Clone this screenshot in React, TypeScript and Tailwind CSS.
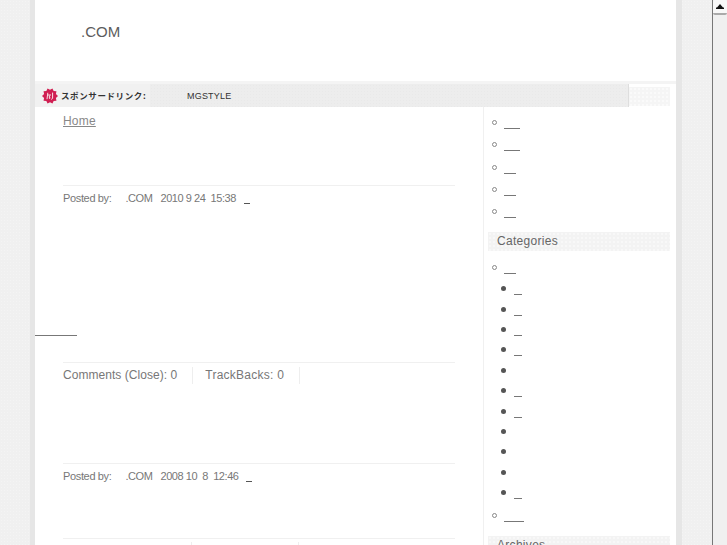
const font = { fontFamily: '"Liberation Sans", Arial, sans-serif' };

const weave =
  "bg-[#ededed] bg-[radial-gradient(#e9e9e9_1px,transparent_1px)] bg-[length:3px_3px]";

function Gap({ w }: { w: number }) {
  return <span className="inline-block border-b border-[#777] h-[12px] align-baseline" style={{ width: w }} />;
}

function Outer({ w, h = 22.3 }: { w: number; h?: number }) {
  return (
    <div className="flex items-center pl-[8px]" style={{ height: h }}>
      <span className="w-[5px] h-[5px] rounded-full border border-[#888] mr-[7px] -mt-[1px]" />
      <Gap w={w} />
    </div>
  );
}

function Inner({ w }: { w?: number }) {
  return (
    <div className="flex items-center pl-[17px] h-[20.4px]">
      <span className="w-[5px] h-[5px] rounded-full bg-[#555] mr-[8px] -mt-[1px]" />
      {w ? <Gap w={w} /> : null}
    </div>
  );
}

function SideHead({ children }: { children: string }) {
  return (
    <div className="ml-[4px] w-[182px] h-[19px] bg-[#f3f3f3] bg-[radial-gradient(#f8f8f8_1px,transparent_1px)] bg-[length:4px_4px] pl-[9px] text-[12px] leading-[18px] tracking-[0.3px] text-[#666]">
      {children}
    </div>
  );
}

function Logo() {
  const pts = Array.from({ length: 20 }, (_, i) => {
    const r = i % 2 ? 6.2 : 8;
    const a = (i * Math.PI) / 10;
    return `${8 + r * Math.cos(a)},${8 + r * Math.sin(a)}`;
  }).join(" ");
  return (
    <svg width="16" height="16" viewBox="0 0 16 16" className="shrink-0">
      <polygon points={pts} fill="#d01f52" />
      <path d="M5.8 4.8l-.8 6.4M6 7h3M10.6 4.6v5.8l-1.4 1M7.4 7.5v3l1-.6" stroke="#f8dfe6" strokeWidth="1" fill="none" />
    </svg>
  );
}

function PostedBy({ date, gap = 8 }: { date: string; gap?: number }) {
  return (
    <div className="h-[24px] flex items-center text-[11px] tracking-[-0.45px] text-[#777] whitespace-pre">
      <span className="w-[62.5px] tracking-[-0.35px]">Posted by:</span>
      <span className="w-[35px]">.COM</span>
      <span>{date}</span>
      <span className="inline-block w-[6px] border-b border-[#555] h-[11px]" style={{ marginLeft: gap }} />
    </div>
  );
}

export default function App() {
  return (
    <div
      className="w-[727px] h-[545px] overflow-hidden flex bg-[#f0f0f0] bg-[radial-gradient(#f4f4f4_1px,transparent_1px)] bg-[length:3px_3px]"
      style={font}
    >
      <div className="w-[30px] shrink-0" />
      <div className="w-[5px] shrink-0 bg-[#e6e6e6]" />
      <main className="w-[641px] shrink-0 bg-white flex flex-col">
        <header className="h-[81px] shrink-0 pl-[46px] pt-[22px] text-[15px] leading-[19px] tracking-[0.05px] text-[#5c5c5c]">.COM</header>
        <div className="h-[3px] shrink-0 bg-[#f4f4f4]" />
        <div className="h-[23px] shrink-0 flex">
          <div className="w-[115px] bg-[#f1f1f1] flex items-center pl-[7px] gap-[3px]">
            <Logo />
            <span
              className="text-[8.5px] font-bold tracking-[0.6px] text-[#333] whitespace-nowrap"
              style={{ fontFamily: '"Noto Sans CJK JP", sans-serif' }}
            >
              スポンサードリンク:
            </span>
          </div>
          <div className={`w-[479px] ${weave} border-r border-[#dedede] pl-[37px] pt-[1px] text-[9px] leading-[23px] tracking-[0.2px] text-[#333]`}>MGSTYLE</div>
          <div className="mt-[3px] mb-[1px] w-[41px] bg-[#f5f5f5] bg-[radial-gradient(#fafafa_1px,transparent_1px)] bg-[length:4px_4px]" />
        </div>
        <div className="flex flex-1 min-h-0">
          <section className="w-[448px] shrink-0 pl-[28px] pr-[28px]">
            <div className="h-[78px] pt-[7px] text-[12px] leading-[15px] tracking-[0.2px] text-[#888] underline">Home</div>
            <div className="border-t border-[#f0f0f0]">
              <PostedBy date="2010 9 24  15:38" />
            </div>
            <div className="h-[126px] -ml-[28px] flex items-end">
              <span className="block w-[42px] border-b border-[#777]" />
            </div>
            <div className="h-[26px]" />
            <div className="border-t border-[#f0f0f0] h-[101px]">
              <div className="flex pt-[4px] h-[21px] text-[12px] leading-[16px] text-[#777]">
                <span className="pr-[15px] border-r border-[#eeeeee] tracking-[0.05px]">Comments (Close): 0</span>
                <span className="pl-[12px] pr-[15px] border-r border-[#eeeeee] tracking-[0.25px]">TrackBacks: 0</span>
              </div>
            </div>
            <div className="border-t border-[#f0f0f0] h-[75px]">
              <PostedBy date="2008 10  8  12:46" />
            </div>
            <div className="border-t border-[#f0f0f0] h-[7px] flex pt-[3px]">
              <span className="w-[129px] border-r border-[#eeeeee]" />
              <span className="w-[107px] border-r border-[#eeeeee]" />
            </div>
          </section>
          <aside className="flex-1 border-l border-[#f0f0f0] pt-[5px]">
            <Outer w={16} />
            <Outer w={16} />
            <Outer w={12} />
            <Outer w={12} />
            <Outer w={12} />
            <div className="h-[8.5px]" />
            <SideHead>Categories</SideHead>
            <div className="h-[6px]" />
            <Outer w={12} h={22} />
            <Inner w={8} />
            <Inner w={8} />
            <Inner w={8} />
            <Inner w={8} />
            <Inner />
            <Inner w={8} />
            <Inner w={8} />
            <Inner />
            <Inner />
            <Inner />
            <Inner w={8} />
            <Outer w={20} h={26} />
            <div className="h-[7px]" />
            <SideHead>Archives</SideHead>
          </aside>
        </div>
      </main>
      <div className="w-[6px] shrink-0 bg-[#e6e6e6]" />
      <div className="w-[30px] shrink-0" />
      <div className="w-[15px] shrink-0 border-l border-[#777] bg-[#f0f0f0]">
        <div className="h-[15px] border-b-2 border-[#aaa] bg-[#f8f8f8] flex items-center justify-center rounded-[2px]">
          <svg width="8" height="5" viewBox="0 0 8 5"><path d="M4 0l3 3.5h1V5H0V3.5h1z" fill="#111" /></svg>
        </div>
      </div>
    </div>
  );
}
